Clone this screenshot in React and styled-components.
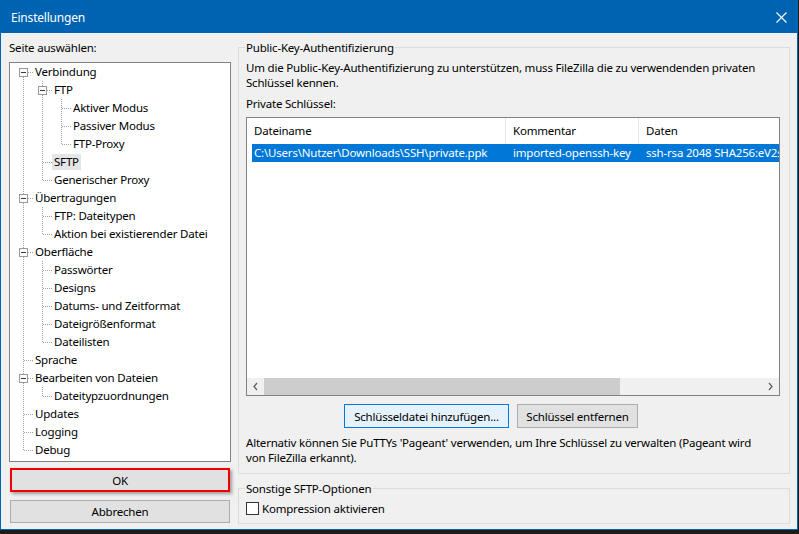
import React from 'react';
import styled, { createGlobalStyle } from 'styled-components';

const GlobalStyle = createGlobalStyle`
  html, body { margin: 0; padding: 0; background: #1c1c1c; }
  body {
    font-family: "Noto Sans", "Open Sans", sans-serif;
    font-size: 11.5px;
    letter-spacing: -0.2px;
    color: #000;
  }
  * { box-sizing: border-box; }
`;

const Window = styled.div`
  width: 798px;
  height: 530px;
  background: #f0f0f0;
  border: 1px solid #0063b1;
  border-top: 0;
  display: flex;
  flex-direction: column;
  overflow: hidden;
`;

const TitleBar = styled.div`
  height: 33px;
  flex: none;
  background: #0063b1;
  color: #fff;
  display: flex;
  align-items: center;
  justify-content: space-between;
  padding: 1px 10px 0 10px;
  font-size: 12px;
`;

const Body = styled.div`
  flex: 1;
  display: flex;
  gap: 7px;
  padding: 7px 7px 4px 8px;
  min-height: 0;
`;

const LeftColumn = styled.div`
  width: 222px;
  flex: none;
  display: flex;
  flex-direction: column;
`;

const PaneLabel = styled.div`
  line-height: 15px;
  height: 15px;
  margin-bottom: 7px;
`;

const TreeBox = styled.div`
  height: 400px;
  background: #fff;
  border: 1px solid #828282;
  padding: 0 0 0 4px;
  overflow: hidden;
`;

const TreeRow = styled.div`
  height: 18px;
  display: flex;
  align-items: center;
  white-space: nowrap;
`;

const TreeLabel = styled.span`
  padding: 0 2px;
  line-height: 16px;
  background: ${p => (p.$selected ? '#e5e5e5' : 'transparent')};
`;

const DialogButton = styled.button`
  font: inherit;
  letter-spacing: inherit;
  color: #000;
  height: ${p => p.$h || 23}px;
  margin: ${p => p.$mt || 0}px 1px 0 1px;
  background: #e1e1e1;
  border: 1px solid #adadad;
  padding: 0;
  cursor: default;
`;

const HighlightButton = styled(DialogButton)`
  border: 2px solid #f00000;
  box-shadow: 2px 2px 3px rgba(0, 0, 0, 0.35);
`;

const RightColumn = styled.div`
  flex: 1;
  display: flex;
  flex-direction: column;
  gap: 7px;
  min-width: 0;
`;

const GroupBox = styled.fieldset`
  margin: 0;
  min-width: 0;
  border: 1px solid #dcdcdc;
  padding: 5px 7px ${p => p.$pb}px 7px;
`;

const Legend = styled.legend`
  padding: 0 1px;
  margin-left: -1px;
  line-height: 15px;
`;

const Para = styled.div`
  line-height: 15px;
  white-space: nowrap;
  margin-top: ${p => p.$mt || 0}px;
`;

const ListView = styled.div`
  margin-top: 6px;
  width: 534px;
  height: 279px;
  border: 1px solid #828282;
  background: #fff;
  display: flex;
  flex-direction: column;
  overflow: hidden;
`;

const ListHeader = styled.div`
  height: 26px;
  flex: none;
  display: flex;
  white-space: nowrap;
`;

const HeaderCell = styled.div`
  flex: none;
  width: ${p => p.$w}px;
  padding-left: 7px;
  line-height: 26px;
  border-right: 1px solid #e5e5e5;
`;

const ListBody = styled.div`
  flex: 1;
  overflow: hidden;
`;

const ListRow = styled.div`
  height: 18px;
  margin-left: 5px;
  display: flex;
  white-space: nowrap;
  background: #0078d7;
  color: #fff;
  line-height: 18px;
  overflow: hidden;
`;

const RowCell = styled.div`
  flex: none;
  width: ${p => (p.$w ? `${p.$w}px` : 'auto')};
  padding-left: ${p => p.$pl}px;
`;

const ScrollBar = styled.div`
  height: 17px;
  flex: none;
  display: flex;
  background: #f0f0f0;
`;

const ScrollArrow = styled.div`
  width: 17px;
  flex: none;
  display: flex;
  align-items: center;
  justify-content: center;
`;

const ScrollTrack = styled.div`
  flex: 1;
  display: flex;
  align-items: stretch;
`;

const ScrollThumb = styled.div`
  width: 356px;
  background: #cdcdcd;
`;

const ButtonRow = styled.div`
  margin-top: 8px;
  display: flex;
  gap: 8px;
  padding-left: 98px;
`;

const PushButton = styled.button`
  font: inherit;
  letter-spacing: inherit;
  color: #000;
  height: 24px;
  width: ${p => p.$w}px;
  padding: 0;
  background: ${p => (p.$focus ? '#e5f1fb' : '#e1e1e1')};
  border: 1px solid ${p => (p.$focus ? '#0078d7' : '#adadad')};
  cursor: default;
`;

const CheckRow = styled.label`
  height: 15px;
  display: flex;
  align-items: center;
  gap: 3px;
  line-height: 15px;
`;

const CheckBox = styled.span`
  width: 13px;
  height: 13px;
  border: 1px solid #333;
  background: #fff;
  flex: none;
`;

const TREE = [
  {
    label: 'Verbindung',
    children: [
      {
        label: 'FTP',
        children: [{ label: 'Aktiver Modus' }, { label: 'Passiver Modus' }, { label: 'FTP-Proxy' }],
      },
      { label: 'SFTP', selected: true },
      { label: 'Generischer Proxy' },
    ],
  },
  {
    label: 'Übertragungen',
    children: [{ label: 'FTP: Dateitypen' }, { label: 'Aktion bei existierender Datei' }],
  },
  {
    label: 'Oberfläche',
    children: [
      { label: 'Passwörter' },
      { label: 'Designs' },
      { label: 'Datums- und Zeitformat' },
      { label: 'Dateigrößenformat' },
      { label: 'Dateilisten' },
    ],
  },
  { label: 'Sprache' },
  { label: 'Bearbeiten von Dateien', children: [{ label: 'Dateitypzuordnungen' }] },
  { label: 'Updates' },
  { label: 'Logging' },
  { label: 'Debug' },
];

function flatten(nodes, depth = 0, trail = [], out = []) {
  nodes.forEach((n, i) => {
    const isLast = i === nodes.length - 1;
    out.push({
      label: n.label,
      depth,
      trail,
      isLast,
      isFirstRoot: depth === 0 && i === 0,
      hasChildren: !!n.children,
      selected: !!n.selected,
    });
    if (n.children) flatten(n.children, depth + 1, trail.concat(!isLast), out);
  });
  return out;
}

const ROWS = flatten(TREE);
const DOT = { stroke: '#a0a0a0', strokeWidth: 1, strokeDasharray: '1 1', shapeRendering: 'crispEdges' };

function Guide({ through, top, bottom, branch, expander }) {
  return (
    <svg width="19" height="18" viewBox="0 0 19 18" style={{ flex: 'none', display: 'block' }}>
      {through && <line x1="9.5" y1="0" x2="9.5" y2="18" {...DOT} />}
      {top && <line x1="9.5" y1="0" x2="9.5" y2="9" {...DOT} />}
      {bottom && <line x1="9.5" y1="10" x2="9.5" y2="18" {...DOT} />}
      {branch && <line x1="10" y1="9.5" x2="19" y2="9.5" {...DOT} />}
      {expander && (
        <g shapeRendering="crispEdges">
          <rect x="5.5" y="5.5" width="8" height="8" fill="#fafafa" stroke="#9a9a9a" />
          <line x1="7" y1="9.5" x2="12" y2="9.5" stroke="#3c3c3c" />
        </g>
      )}
    </svg>
  );
}

function TreeItem({ row }) {
  const guides = [];
  for (let k = 0; k < row.depth; k++) {
    guides.push(<Guide key={k} through={row.trail[k]} />);
  }
  guides.push(
    <Guide
      key="own"
      top={!row.isFirstRoot}
      bottom={!row.isLast}
      branch
      expander={row.hasChildren}
    />
  );
  return (
    <TreeRow>
      {guides}
      <TreeLabel $selected={row.selected}>{row.label}</TreeLabel>
    </TreeRow>
  );
}

function Chevron({ dir }) {
  const pts = dir === 'left' ? '5,1 2,4.5 5,8' : '2,1 5,4.5 2,8';
  return (
    <svg width="7" height="9" viewBox="0 0 7 9">
      <polyline points={pts} fill="none" stroke="#606060" strokeWidth="1.3" />
    </svg>
  );
}

export default function App() {
  return (
    <>
      <GlobalStyle />
      <Window>
        <TitleBar>
          <span>Einstellungen</span>
          <svg width="11" height="11" viewBox="0 0 11 11">
            <line x1="0.5" y1="0.5" x2="10.5" y2="10.5" stroke="#fff" strokeWidth="1.1" />
            <line x1="10.5" y1="0.5" x2="0.5" y2="10.5" stroke="#fff" strokeWidth="1.1" />
          </svg>
        </TitleBar>
        <Body>
          <LeftColumn>
            <PaneLabel>Seite auswählen:</PaneLabel>
            <TreeBox>
              {ROWS.map((r, i) => (
                <TreeItem key={i} row={r} />
              ))}
            </TreeBox>
            <HighlightButton $mt={6} $h={24}>OK</HighlightButton>
            <DialogButton $mt={8}>Abbrechen</DialogButton>
          </LeftColumn>
          <RightColumn>
            <GroupBox $pb={8}>
              <Legend>Public-Key-Authentifizierung</Legend>
              <Para>
                Um die Public-Key-Authentifizierung zu unterstützen, muss FileZilla die zu verwendenden privaten
                <br />
                Schlüssel kennen.
              </Para>
              <Para $mt={6}>Private Schlüssel:</Para>
              <ListView>
                <ListHeader>
                  <HeaderCell $w={259}>Dateiname</HeaderCell>
                  <HeaderCell $w={133}>Kommentar</HeaderCell>
                  <HeaderCell $w={200}>Daten</HeaderCell>
                </ListHeader>
                <ListBody>
                  <ListRow>
                    <RowCell $w={254} $pl={2}>C:\Users\Nutzer\Downloads\SSH\private.ppk</RowCell>
                    <RowCell $w={133} $pl={7}>imported-openssh-key</RowCell>
                    <RowCell $pl={7}>ssh-rsa 2048 SHA256:eV2sQk8pX3</RowCell>
                  </ListRow>
                </ListBody>
                <ScrollBar>
                  <ScrollArrow>
                    <Chevron dir="left" />
                  </ScrollArrow>
                  <ScrollTrack>
                    <ScrollThumb />
                  </ScrollTrack>
                  <ScrollArrow>
                    <Chevron dir="right" />
                  </ScrollArrow>
                </ScrollBar>
              </ListView>
              <ButtonRow>
                <PushButton $w={165} $focus>Schlüsseldatei hinzufügen...</PushButton>
                <PushButton $w={121}>Schlüssel entfernen</PushButton>
              </ButtonRow>
              <Para $mt={7}>
                Alternativ können Sie PuTTYs 'Pageant' verwenden, um Ihre Schlüssel zu verwalten (Pageant wird
                <br />
                von FileZilla erkannt).
              </Para>
            </GroupBox>
            <GroupBox $pb={7}>
              <Legend>Sonstige SFTP-Optionen</Legend>
              <CheckRow>
                <CheckBox />
                Kompression aktivieren
              </CheckRow>
            </GroupBox>
          </RightColumn>
        </Body>
      </Window>
    </>
  );
}
